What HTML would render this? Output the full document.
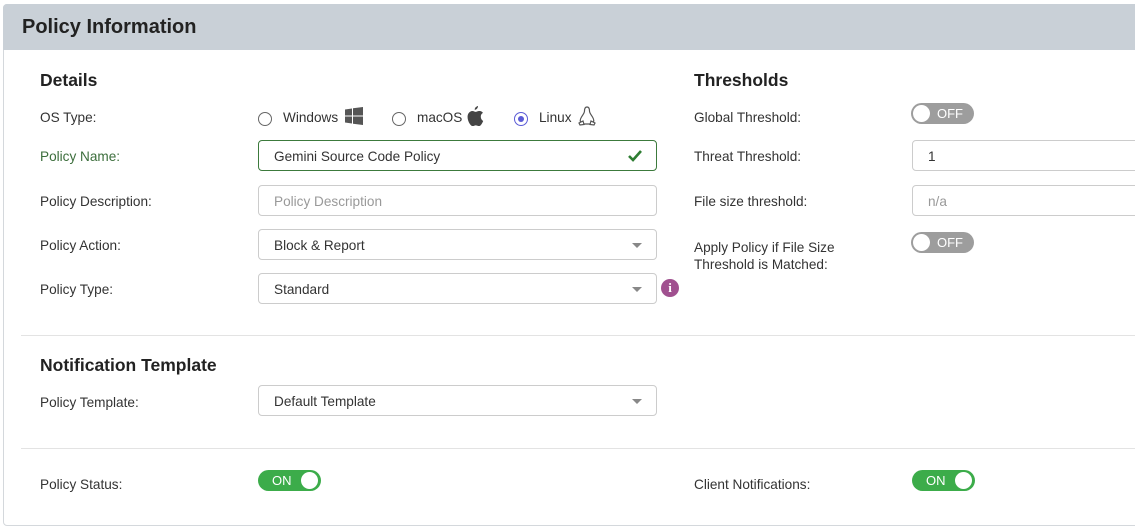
<!DOCTYPE html>
<html><head><meta charset="utf-8"><style>
*{box-sizing:border-box;margin:0;padding:0}
body{width:1135px;height:529px;background:#fff;font-family:"Liberation Sans",sans-serif;color:#333;position:relative;overflow:hidden;font-size:14px}
.panel{position:absolute;left:3px;top:4px;width:1140px;height:522px;border:1px solid #d4d8dc;border-radius:4px}
.hdr{position:absolute;left:3px;top:4px;width:1140px;height:46px;background:#c9d0d7;border-radius:4px 4px 0 0}
.a{position:absolute;white-space:nowrap}
.h{font-weight:bold;font-size:17.5px;color:#222}
.lbl{font-size:13.6px;color:#333}
.inp{position:absolute;height:31px;border:1px solid #ccc;border-radius:4px;background:#fff;font-size:13.6px;padding-left:15px;line-height:31px}
.caret{position:absolute;right:14px;top:13px;width:0;height:0;border-left:5px solid transparent;border-right:5px solid transparent;border-top:5px solid #888}
.tog{position:absolute;width:63px;height:21px;border-radius:11px;color:#fff;font-size:13px;line-height:21px}
.off{background:#9d9d9d}.on{background:#3cac4a}
.knob{position:absolute;top:2px;width:17px;height:17px;border-radius:50%;background:#fff}
.hr{position:absolute;left:21px;width:1114px;height:1px;background:#e3e3e3}
.radio{position:absolute;width:14px;height:14px;border:1px solid #666;border-radius:50%;background:#fff}
</style></head><body>
<div class="panel"></div>
<div class="hdr"></div>
<div class="a" style="left:22px;top:16px;font-size:20px;font-weight:bold;color:#222">Policy Information</div>

<div class="a h" style="left:40px;top:70px">Details</div>
<div class="a h" style="left:694px;top:70px">Thresholds</div>

<div class="a lbl" style="left:40px;top:110px">OS Type:</div>
<div class="radio" style="left:258px;top:112px"></div>
<div class="a lbl" style="left:283px;top:110px">Windows</div>
<svg class="a" style="left:345px;top:107px" width="18" height="18" viewBox="0 0 18 18"><path d="M0 2.5L7 1.5V8.5H0ZM8 1.3L18 0V8.5H8ZM0 9.5H7V16.5L0 15.5ZM8 9.5H18V18L8 16.7Z" fill="#555"/></svg>
<div class="radio" style="left:392px;top:112px"></div>
<div class="a lbl" style="left:417px;top:110px">macOS</div>
<svg class="a" style="left:466px;top:106px" width="18" height="20" viewBox="0 0 18 20"><path d="M12 0C12 2 10.5 3.8 8.7 3.8 8.6 2 10.2 0.3 12 0ZM14.8 10.5C14.8 8 16.9 7 17 6.9 15.8 5.2 14 5 13.4 5 11.9 4.8 10.4 5.9 9.7 5.9 8.9 5.9 7.7 5 6.5 5 4.8 5 3.3 6 2.4 7.5 0.6 10.6 2 15.2 3.7 17.7 4.6 18.9 5.6 20.2 6.8 20.2 8 20.1 8.4 19.4 9.9 19.4 11.3 19.4 11.7 20.2 12.9 20.1 14.2 20.1 15 18.9 15.8 17.7 16.8 16.3 17.2 15 17.2 14.9 17.2 14.9 14.8 14 14.8 10.5Z" fill="#444"/></svg>
<div class="radio" style="left:514px;top:112px;border-color:#5b5bd6"><div style="position:absolute;left:3px;top:3px;width:6px;height:6px;border-radius:50%;background:#5b5bd6"></div></div>
<div class="a lbl" style="left:539px;top:110px">Linux</div>
<svg class="a" style="left:577px;top:106px" width="20" height="20" viewBox="0 0 20 20"><path d="M10 1C8 1 7.5 3 7.5 5 7.5 7 6 8.5 4.5 11 3 13.5 3 15.5 4 16.5M10 1C12 1 12.5 3 12.5 5 12.5 7 14 8.5 15.5 11 17 13.5 17 15.5 16 16.5M2 17L6 15 7 18.5 3 19ZM18 17L14 15 13 18.5 17 19ZM7 18H13" stroke="#555" fill="none" stroke-width="1.2"/></svg>

<div class="a lbl" style="left:40px;top:149px;color:#3c6e3c">Policy Name:</div>
<div class="inp" style="left:258px;top:140px;width:399px;border-color:#3c7a3c;color:#333">Gemini Source Code Policy<svg style="position:absolute;right:14px;top:9px" width="14" height="12" viewBox="0 0 14 12"><path d="M1 6L5 10 13 1" stroke="#2e7d32" stroke-width="2.6" fill="none"/></svg></div>

<div class="a lbl" style="left:40px;top:194px">Policy Description:</div>
<div class="inp" style="left:258px;top:185px;width:399px;color:#999">Policy Description</div>

<div class="a lbl" style="left:40px;top:238px">Policy Action:</div>
<div class="inp" style="left:258px;top:229px;width:399px">Block &amp; Report<div class="caret"></div></div>

<div class="a lbl" style="left:40px;top:282px">Policy Type:</div>
<div class="inp" style="left:258px;top:273px;width:399px">Standard<div class="caret"></div></div>
<div class="a" style="left:661px;top:279px;width:18px;height:18px;border-radius:50%;background:#a0508f;color:#fff;font-weight:bold;font-size:13px;text-align:center;line-height:18px;font-family:'Liberation Serif',serif">i</div>

<div class="a lbl" style="left:694px;top:110px">Global Threshold:</div>
<div class="tog off" style="left:911px;top:103px"><div class="knob" style="left:2px"></div><span style="position:absolute;left:26px">OFF</span></div>
<div class="a lbl" style="left:694px;top:149px">Threat Threshold:</div>
<div class="inp" style="left:912px;top:140px;width:240px">1</div>
<div class="a lbl" style="left:694px;top:194px">File size threshold:</div>
<div class="inp" style="left:912px;top:185px;width:240px;color:#999">n/a</div>
<div class="a lbl" style="left:694px;top:239px;line-height:17px">Apply Policy if File Size<br>Threshold is Matched:</div>
<div class="tog off" style="left:911px;top:232px"><div class="knob" style="left:2px"></div><span style="position:absolute;left:26px">OFF</span></div>

<div class="hr" style="top:335px"></div>
<div class="a h" style="left:40px;top:355px">Notification Template</div>
<div class="a lbl" style="left:40px;top:395px">Policy Template:</div>
<div class="inp" style="left:258px;top:385px;width:399px">Default Template<div class="caret"></div></div>

<div class="hr" style="top:448px"></div>
<div class="a lbl" style="left:40px;top:477px">Policy Status:</div>
<div class="tog on" style="left:258px;top:470px"><span style="position:absolute;left:14px">ON</span><div class="knob" style="left:43px"></div></div>
<div class="a lbl" style="left:694px;top:477px">Client Notifications:</div>
<div class="tog on" style="left:912px;top:470px"><span style="position:absolute;left:14px">ON</span><div class="knob" style="left:43px"></div></div>
</body></html>
